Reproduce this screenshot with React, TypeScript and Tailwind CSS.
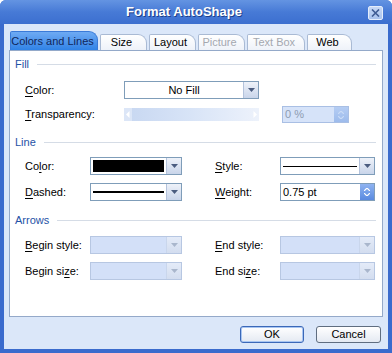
import React from "react";

const Tri = ({ disabled }: { disabled?: boolean }) => (
  <svg width="7" height="4" viewBox="0 0 7 4">
    <path d="M0 0 H7 L3.5 4 Z" fill={disabled ? "#a9b6cc" : "#4b5d80"} />
  </svg>
);

const DropBtn = ({ disabled }: { disabled?: boolean }) => (
  <div
    className={`w-[15px] h-full flex items-center justify-center border-l ${
      disabled
        ? "border-[#c9d6ec] bg-gradient-to-b from-[#e4ebf8] to-[#d3ddef]"
        : "border-[#b4c3dc] bg-gradient-to-b from-[#eef2f9] to-[#c9d5ea]"
    }`}
  >
    <Tri disabled={disabled} />
  </div>
);

type ComboProps = {
  className: string;
  disabled?: boolean;
  children?: React.ReactNode;
};

const Combo = ({ className, disabled, children }: ComboProps) => (
  <div
    className={`flex h-[18px] border ${
      disabled ? "border-[#b7c7e2] bg-[#d3e0f8]" : "border-[#7f9db9] bg-white"
    } ${className}`}
  >
    <div className="flex-1 flex items-center min-w-0">{children}</div>
    <DropBtn disabled={disabled} />
  </div>
);

const Spin = ({ disabled }: { disabled?: boolean }) => (
  <div
    className={`w-[14px] h-full flex flex-col items-center justify-center gap-[2px] ${
      disabled
        ? "bg-gradient-to-b from-[#b5cdf3] to-[#9dbbec]"
        : "bg-gradient-to-b from-[#8fb3f0] to-[#5a8ae0]"
    }`}
  >
    <svg width="6" height="3" viewBox="0 0 6 3">
      <path d="M0 3 L3 0 L6 3" fill="none" stroke={disabled ? "#c9dbf6" : "#ffffff"} strokeWidth="1.2" />
    </svg>
    <svg width="6" height="3" viewBox="0 0 6 3">
      <path d="M0 0 L3 3 L6 0" fill="none" stroke={disabled ? "#c9dbf6" : "#ffffff"} strokeWidth="1.2" />
    </svg>
  </div>
);

const Key = ({ text, at }: { text: string; at: number }) => (
  <span className="whitespace-nowrap">
    {text.slice(0, at)}
    <span className="underline underline-offset-[2px]">{text[at]}</span>
    {text.slice(at + 1)}
  </span>
);

const Header = ({ title }: { title: string }) => (
  <div className="flex items-center h-[14px] pl-[5px] pr-[6px]">
    <span className="text-[#1f52a6]">{title}</span>
    <div className="flex-1 ml-[8px] h-px bg-[#d5dce6]" />
  </div>
);

const tabs = [
  { label: "Size", w: "w-[47px]", off: false },
  { label: "Layout", w: "w-[47px]", off: false },
  { label: "Picture", w: "w-[47px]", off: true },
  { label: "Text Box", w: "w-[58px]", off: true },
  { label: "Web", w: "w-[45px]", off: false },
];

export default function App() {
  return (
    <div className="w-[392px] h-[353px] flex flex-col bg-[#3a6bcd] rounded-t-[6px] overflow-hidden font-['Liberation_Sans',Arial,sans-serif] text-[11px] text-black">
      <div className="h-[24px] flex items-center bg-gradient-to-b from-[#6494e2] via-[#477ad6] to-[#3c6fcf]">
        <div className="flex-1 text-center text-white font-bold text-[13px] [text-shadow:1px_1px_0_#1d3f8a]">
          Format AutoShape
        </div>
        <div className="w-[15px] h-[14px] mr-[9px] mt-[2px] rounded-[2px] border border-[#e4edfb] bg-gradient-to-b from-[#c6d8f5] to-[#a9c3ee] flex items-center justify-center">
          <svg width="9" height="8" viewBox="0 0 9 8">
            <path d="M1 0.5 L8 7.5 M8 0.5 L1 7.5" stroke="#3f5c94" strokeWidth="1.6" />
          </svg>
        </div>
      </div>

      <div className="flex-1 mx-[4px] mb-[4px] bg-[#dbe7f9] flex flex-col px-[5px]">
        <div className="mt-[7px] h-[19px] flex items-end pl-[1px] gap-[2px]">
          <div className="w-[88px] h-[19px] flex items-center justify-center whitespace-nowrap rounded-tr-[9px] rounded-tl-[2px] border border-b-0 border-[#3a7ad8] bg-gradient-to-b from-[#6eaaf3] to-[#2f82e6] text-[#10265a] pr-[3px]">
            Colors and Lines
          </div>
          {tabs.map((t) => (
            <div
              key={t.label}
              className={`${t.w} h-[16px] flex items-center justify-center whitespace-nowrap rounded-tr-[9px] rounded-tl-[2px] border border-b-0 border-[#a9bad4] bg-gradient-to-b from-white to-[#eef2f9] pr-[4px] ${
                t.off ? "text-[#a4a8b0]" : "text-black"
              }`}
            >
              {t.label}
            </div>
          ))}
        </div>

        <div className="h-[267px] bg-white border border-[#94a9c9] flex flex-col">
          <div className="mt-[6px]">
            <Header title="Fill" />
          </div>
          <div className="mt-[10px] h-[18px] flex items-center pl-[15px]">
            <div className="w-[99px]">
              <Key text="Color:" at={0} />
            </div>
            <Combo className="w-[135px]">
              <span className="flex-1 text-center">No Fill</span>
            </Combo>
          </div>
          <div className="mt-[7px] h-[17px] flex items-center pl-[15px]">
            <div className="w-[99px]">
              <Key text="Transparency:" at={0} />
            </div>
            <div className="w-[135px] h-[13px] flex items-center justify-between bg-gradient-to-r from-[#c7d7f1] via-[#d8e4f7] to-[#edf2fb]">
              <svg width="8" height="13" viewBox="0 0 8 13" className="bg-[#dce6f7]">
                <path d="M5.5 3 L2 6.5 L5.5 10 Z" fill="#ffffff" />
              </svg>
              <svg width="8" height="13" viewBox="0 0 8 13">
                <path d="M2.5 3 L6 6.5 L2.5 10 Z" fill="#ffffff" />
              </svg>
            </div>
            <div className="ml-[23px] w-[67px] h-[17px] flex border border-[#a9bfe4] bg-[#d6e3f9]">
              <span className="flex-1 pl-[2px] text-[#8d9bb2] leading-[15px]">0 %</span>
              <Spin disabled />
            </div>
          </div>

          <div className="mt-[12px]">
            <Header title="Line" />
          </div>
          <div className="mt-[8px] h-[18px] flex items-center pl-[15px]">
            <div className="w-[65px]">
              <Key text="Color:" at={2} />
            </div>
            <Combo className="w-[92px]">
              <div className="flex-1 h-[12px] mx-[2px] bg-black" />
            </Combo>
            <div className="w-[33px]" />
            <div className="w-[65px]">
              <Key text="Style:" at={0} />
            </div>
            <Combo className="w-[95px]">
              <div className="flex-1 h-px mx-[2px] bg-black" />
            </Combo>
          </div>
          <div className="mt-[8px] h-[18px] flex items-center pl-[15px]">
            <div className="w-[65px]">
              <Key text="Dashed:" at={0} />
            </div>
            <Combo className="w-[92px]">
              <div className="flex-1 h-[2px] mx-[2px] bg-black" />
            </Combo>
            <div className="w-[33px]" />
            <div className="w-[65px]">
              <Key text="Weight:" at={0} />
            </div>
            <div className="w-[95px] h-[18px] flex border border-[#7f9db9] bg-white">
              <span className="flex-1 pl-[2px] leading-[16px]">0.75 pt</span>
              <Spin />
            </div>
          </div>

          <div className="mt-[12px]">
            <Header title="Arrows" />
          </div>
          <div className="mt-[9px] h-[18px] flex items-center pl-[15px]">
            <div className="w-[65px]">
              <Key text="Begin style:" at={0} />
            </div>
            <Combo className="w-[92px]" disabled />
            <div className="w-[33px]" />
            <div className="w-[65px]">
              <Key text="End style:" at={0} />
            </div>
            <Combo className="w-[95px]" disabled />
          </div>
          <div className="mt-[8px] h-[18px] flex items-center pl-[15px]">
            <div className="w-[65px]">
              <Key text="Begin size:" at={8} />
            </div>
            <Combo className="w-[92px]" disabled />
            <div className="w-[33px]" />
            <div className="w-[65px]">
              <Key text="End size:" at={6} />
            </div>
            <Combo className="w-[95px]" disabled />
          </div>
        </div>

        <div className="mt-[9px] flex justify-end gap-[12px] pr-[2px]">
          <button className="w-[64px] h-[17px] rounded-[3px] border border-[#3b68b8] bg-gradient-to-b from-white to-[#e4e9f2] shadow-[inset_0_0_0_1px_#a9c6f2] leading-[15px]">
            OK
          </button>
          <button className="w-[65px] h-[17px] rounded-[3px] border border-[#5f6d80] bg-gradient-to-b from-white to-[#e4e9f2] leading-[15px]">
            Cancel
          </button>
        </div>
      </div>
    </div>
  );
}
